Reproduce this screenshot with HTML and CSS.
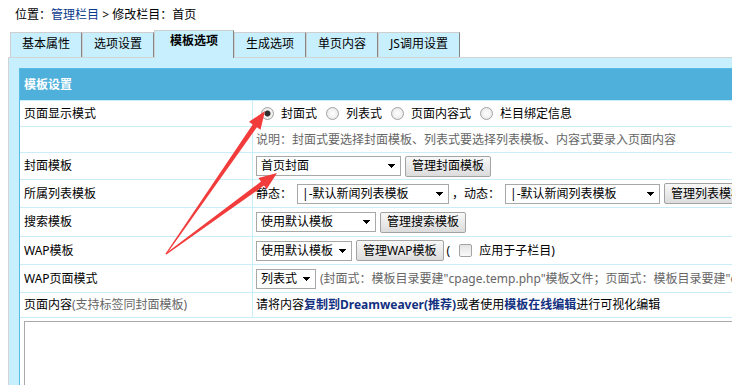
FILE: index.html
```html
<!DOCTYPE html>
<html lang="zh-CN">
<head>
    <meta charset="UTF-8">
    <title>修改栏目</title>
    <link rel="stylesheet" href="styles.css">
</head>
<body>
    <div class="position">位置：<a href="#">管理栏目</a> &gt; 修改栏目：首页</div>

    <ul class="tabs">
        <li>基本属性</li>
        <li>选项设置</li>
        <li class="active">模板选项</li>
        <li>生成选项</li>
        <li>单页内容</li>
        <li>JS调用设置</li>
    </ul>

    <div class="panel">
        <div class="form-box">
            <div class="form-title">模板设置</div>

            <div class="row h26">
                <div class="label">页面显示模式</div>
                <div class="value">
                    <label><input type="radio" name="mode" checked>封面式</label>
                    <label><input type="radio" name="mode">列表式</label>
                    <label><input type="radio" name="mode">页面内容式</label>
                    <label><input type="radio" name="mode">栏目绑定信息</label>
                </div>
            </div>
            <div class="row h26">
                <div class="label"></div>
                <div class="value gray">说明：封面式要选择封面模板、列表式要选择列表模板、内容式要录入页面内容</div>
            </div>
            <div class="row h27">
                <div class="label">封面模板</div>
                <div class="value">
                    <select class="w-cover"><option>首页封面</option></select>
                    <button class="btn">管理封面模板</button>
                </div>
            </div>
            <div class="row h28">
                <div class="label">所属列表模板</div>
                <div class="value">
                    <span>静态：</span>
                    <select class="w-list ml5"><option>|-默认新闻列表模板</option></select>
                    <span class="ml3">，动态：</span>
                    <select class="w-list2 ml5"><option>|-默认新闻列表模板</option></select>
                    <button class="btn">管理列表模板</button>
                </div>
            </div>
            <div class="row h29">
                <div class="label">搜索模板</div>
                <div class="value">
                    <select class="w-search"><option>使用默认模板</option></select>
                    <button class="btn">管理搜索模板</button>
                </div>
            </div>
            <div class="row h28">
                <div class="label">WAP模板</div>
                <div class="value">
                    <select class="w-wap"><option>使用默认模板</option></select>
                    <button class="btn">管理WAP模板</button>
                    <span class="ml3">(</span>
                    <label class="check"><input type="checkbox">应用于子栏目)</label>
                </div>
            </div>
            <div class="row h28">
                <div class="label">WAP页面模式</div>
                <div class="value">
                    <select class="w-mode"><option>列表式</option></select>
                    <span class="gray ml4">(封面式：模板目录要建"cpage.temp.php"模板文件；页面式：模板目录要建"cpage.temp.php"模板文件)</span>
                </div>
            </div>
            <div class="row h25">
                <div class="label">页面内容<span class="gray">(支持标签同封面模板)</span></div>
                <div class="value">
                    请将内容<a href="#" class="strong">复制到Dreamweaver(推荐)</a>或者使用<a href="#" class="strong">模板在线编辑</a>进行可视化编辑
                </div>
            </div>
            <div class="row editor">
                <textarea class="content"></textarea>
            </div>
        </div>
    </div>

    <!-- annotation arrows -->
    <svg class="arrows" width="732" height="385" viewBox="0 0 732 385">
        <polygon points="166.5,254.3 256.9,127.2 260.5,129.8 265,111 249,121.8 252.7,124.4 165.5,253.7" />
        <polygon points="166.4,254.5 264,185.6 266.6,189.3 277,173 258.4,177.9 261,181.6 165.6,253.5" />
    </svg>
</body>
</html>
```

FILE: styles.css
```css
* {
    margin: 0;
    padding: 0;
    box-sizing: border-box;
}

body {
    font-family: "Noto Sans", "Noto Sans CJK SC", sans-serif;
    font-size: 12px;
    line-height: 18px;
    color: #000;
    background: #fff;
    overflow: hidden;
    position: relative;
}

a {
    text-decoration: none;
}

.position {
    height: 30px;
    line-height: 30px;
    padding-left: 15px;
}

.position a {
    color: #0b3a8c;
}

.tabs {
    list-style: none;
    display: flex;
    align-items: flex-end;
    height: 27px;
    padding-left: 10px;
    position: relative;
    z-index: 1;
}

.tabs li {
    height: 25px;
    line-height: 21px;
    padding: 0 11px;
    background: #c8effd;
    border: 1px solid #cfcfcf;
    border-right-color: #858585;
    border-bottom: none;
}

.tabs li.active {
    height: 28px;
    line-height: 19px;
    padding: 0 15px;
    margin-bottom: -1px;
    font-weight: bold;
}

.panel {
    margin-left: 8px;
    width: 1100px;
    height: 340px;
    background: #c8effd;
    border-top: 1px solid #d4d4d4;
    border-left: 1px solid #d4d4d4;
    padding: 10px 0 0 10px;
}

.form-box {
    width: 1080px;
    background: #fff;
    border: 1px solid #55bce6;
}

.form-title {
    height: 31px;
    line-height: 31px;
    padding-left: 4px;
    background: #4fb1db;
    color: #fff;
    font-weight: bold;
}

.row {
    display: flex;
    border-top: 1px solid #c9eef9;
}

.h25 { height: 25px; }
.h26 { height: 26px; }
.h27 { height: 27px; }
.h28 { height: 28px; }
.h29 { height: 29px; }

.label {
    width: 233px;
    padding-left: 4px;
    border-right: 1px solid #c9eef9;
    display: flex;
    align-items: center;
    white-space: nowrap;
}

.value {
    flex: 1;
    padding-left: 3px;
    display: flex;
    align-items: center;
    white-space: nowrap;
}

.value label {
    display: flex;
    align-items: center;
}

.gray {
    color: #666;
}

.ml3 { margin-left: 3px; }
.ml4 { margin-left: 4px; }
.ml5 { margin-left: 5px; }

.strong {
    color: #12307f;
    font-weight: bold;
}

input[type="radio"] {
    appearance: none;
    width: 13px;
    height: 13px;
    margin: 0 7px 0 9px;
    border: 1px solid #a3a3a3;
    border-radius: 50%;
    background: radial-gradient(circle, #fff 0, #f2f2f2 50%, #dcdcdc 100%);
}

.value label:first-child input[type="radio"] {
    margin-left: 5px;
}

input[type="radio"]:checked {
    background: radial-gradient(circle, #2e2e2e 0, #2e2e2e 2.5px, #f4f4f4 3.5px, #dcdcdc 100%);
}

input[type="checkbox"] {
    appearance: none;
    width: 13px;
    height: 13px;
    margin: 0 7px 0 9px;
    border: 1px solid #a3a3a3;
    border-radius: 2px;
    background: linear-gradient(#e4e4e4, #fafafa);
}

select {
    appearance: none;
    height: 20px;
    padding-left: 4px;
    font: inherit;
    color: #000;
    border: 1px solid #a8a8a8;
    background-color: #fff;
    background-image: conic-gradient(from -41deg at 50% 100%, #000 82deg, transparent 0);
    background-position: right 5px center;
    background-size: 7px 4px;
    background-repeat: no-repeat;
}

.w-cover { width: 145px; }
.w-list { width: 152px; }
.w-list2 { width: 155px; }
.w-search { width: 120px; }
.w-wap { width: 96px; }
.w-mode { width: 60px; }

.btn {
    height: 21px;
    margin-left: 4px;
    padding: 0 6px;
    font: inherit;
    color: #000;
    border: 1px solid #a3a3a3;
    border-radius: 2px;
    background: linear-gradient(#f8f8f8, #dcdcdc);
}

.editor {
    padding: 3px 0 0 4px;
    height: 80px;
}

.content {
    width: 1060px;
    height: 120px;
    border: 1px solid #a9a9a9;
    resize: none;
}

.arrows {
    position: absolute;
    top: 0;
    left: 0;
    z-index: 10;
    pointer-events: none;
}

.arrows polygon {
    fill: #f23c3c;
}
```
